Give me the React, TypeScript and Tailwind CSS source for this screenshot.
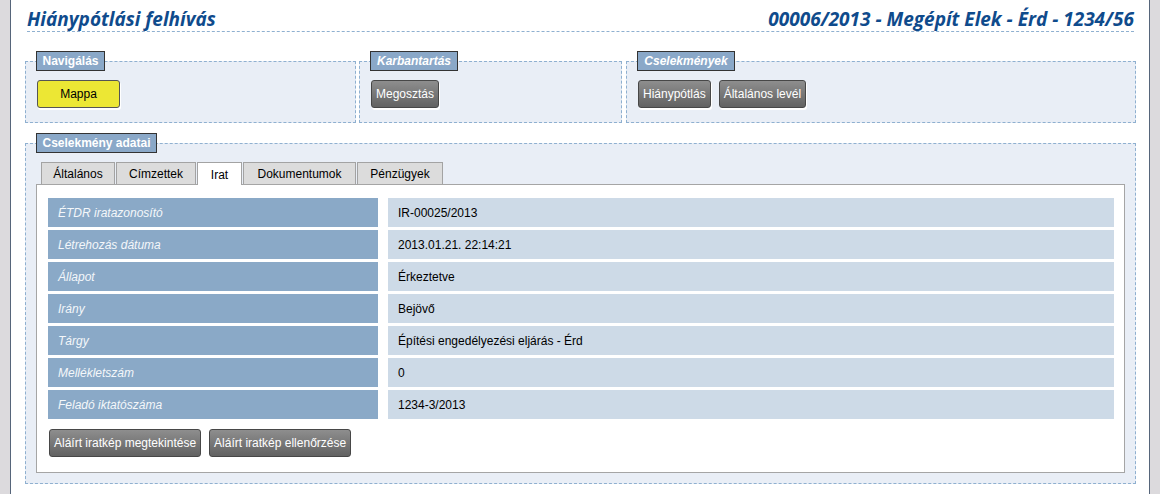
import React from 'react';

const rows = [
  ['ÉTDR iratazonosító', 'IR-00025/2013'],
  ['Létrehozás dátuma', '2013.01.21. 22:14:21'],
  ['Állapot', 'Érkeztetve'],
  ['Irány', 'Bejövő'],
  ['Tárgy', 'Építési engedélyezési eljárás - Érd'],
  ['Mellékletszám', '0'],
  ['Feladó iktatószáma', '1234-3/2013'],
];

const tabs = [
  { label: 'Általános', w: 'w-[74px]' },
  { label: 'Címzettek', w: 'w-[80px]' },
  { label: 'Irat', w: 'w-[45px]', active: true },
  { label: 'Dokumentumok', w: 'w-[113px]' },
  { label: 'Pénzügyek', w: 'w-[86px]' },
];

function GrayButton({ children }: { children: React.ReactNode }) {
  return (
    <button className="h-[28px] rounded-[3px] border border-[#474747] bg-linear-to-b from-[#8e8e8e] to-[#626262] px-[4px] text-[12px] leading-none text-white shadow-[1px_2px_0_0_#ffffff]">
      {children}
    </button>
  );
}

function Legend({ children, w, italic }: { children: React.ReactNode; w: string; italic?: boolean }) {
  return (
    <legend className="p-0">
      <div
        className={`${w} h-[20px] border border-[#333333] bg-[#8aa8c8] text-center text-[12px] font-bold leading-[18px] text-white ${italic ? 'italic' : ''}`}
      >
        {children}
      </div>
    </legend>
  );
}

export default function App() {
  return (
    <div className="flex h-[494px] w-[1160px] bg-[#dcdadd] font-['Liberation_Sans',Arial,sans-serif] text-[12px] text-black">
      <div className="w-[10px]" />
      <main className="w-[1140px] border-x border-[#56657a] bg-white pl-[14px] pr-[13px]">
        {/* Title */}
        <div className="mx-[2px] flex justify-between border-b border-dashed border-[#8fb0d0] pt-[7px] font-['Open_Sans',sans-serif] text-[19px] font-bold italic leading-[24px] text-[#0f4b8c]">
          <h1>Hiánypótlási felhívás</h1>
          <h2>00006/2013 - Megépít Elek - Érd - 1234/56</h2>
        </div>

        {/* Top fieldsets */}
        <div className="mt-[19px] flex">
          <fieldset className="mr-[3px] w-[331px] border border-dashed border-[#8fb0d0] bg-[#e9eef6] px-[10px] pt-[9px] pb-[14px]">
            <Legend w="w-[69px]">Navigálás</Legend>
            <button className="ml-[1px] h-[28px] w-[83px] rounded-[3px] border border-[#555555] bg-[#ece734] text-[12px] text-black shadow-[1px_2px_0_0_#ffffff]">
              Mappa
            </button>
          </fieldset>
          <fieldset className="mr-[4px] w-[263px] border border-dashed border-[#8fb0d0] bg-[#e9eef6] px-[10px] pt-[9px] pb-[14px]">
            <Legend w="w-[88px]" italic>
              Karbantartás
            </Legend>
            <div className="ml-[1px] flex">
              <GrayButton>Megosztás</GrayButton>
            </div>
          </fieldset>
          <fieldset className="w-[510px] border border-dashed border-[#8fb0d0] bg-[#e9eef6] px-[10px] pt-[9px] pb-[14px]">
            <Legend w="w-[98px]" italic>
              Cselekmények
            </Legend>
            <div className="ml-[1px] flex gap-[8px]">
              <GrayButton>Hiánypótlás</GrayButton>
              <GrayButton>Általános levél</GrayButton>
            </div>
          </fieldset>
        </div>

        {/* Details */}
        <fieldset className="mt-[10px] border border-dashed border-[#8fb0d0] bg-[#e9eef6] px-[10px] pt-[9px] pb-[10px]">
          <Legend w="w-[121px]">Cselekmény adatai</Legend>
          <div className="ml-[5px] flex h-[22px] items-start gap-[1px]">
            {tabs.map((t) => (
              <div
                key={t.label}
                className={`${t.w} flex items-center justify-center border border-b-0 border-[#a3a3a3] pt-[1px] ${
                  t.active ? 'relative z-10 h-[23px] bg-white' : 'h-[22px] bg-[#dcdcdc]'
                }`}
              >
                {t.label}
              </div>
            ))}
          </div>
          <div className="border border-[#a5a5a5] bg-white pt-[13px] pr-[10px] pb-[15px] pl-[11px]">
            <div className="grid grid-cols-[330px_1fr] gap-x-[10px] gap-y-[3px]">
              {rows.map(([label, value]) => (
                <React.Fragment key={label}>
                  <div className="flex h-[29px] items-center bg-[#8aa9c7] pl-[10px] italic text-[#f4f7fa]">{label}</div>
                  <div className="flex h-[29px] items-center bg-[#cddae7] pl-[10px]">{value}</div>
                </React.Fragment>
              ))}
            </div>
            <div className="mt-[10px] ml-[1px] flex gap-[8px]">
              <GrayButton>Aláírt iratkép megtekintése</GrayButton>
              <GrayButton>Aláírt iratkép ellenőrzése</GrayButton>
            </div>
          </div>
        </fieldset>
      </main>
      <div className="w-[10px]" />
    </div>
  );
}
